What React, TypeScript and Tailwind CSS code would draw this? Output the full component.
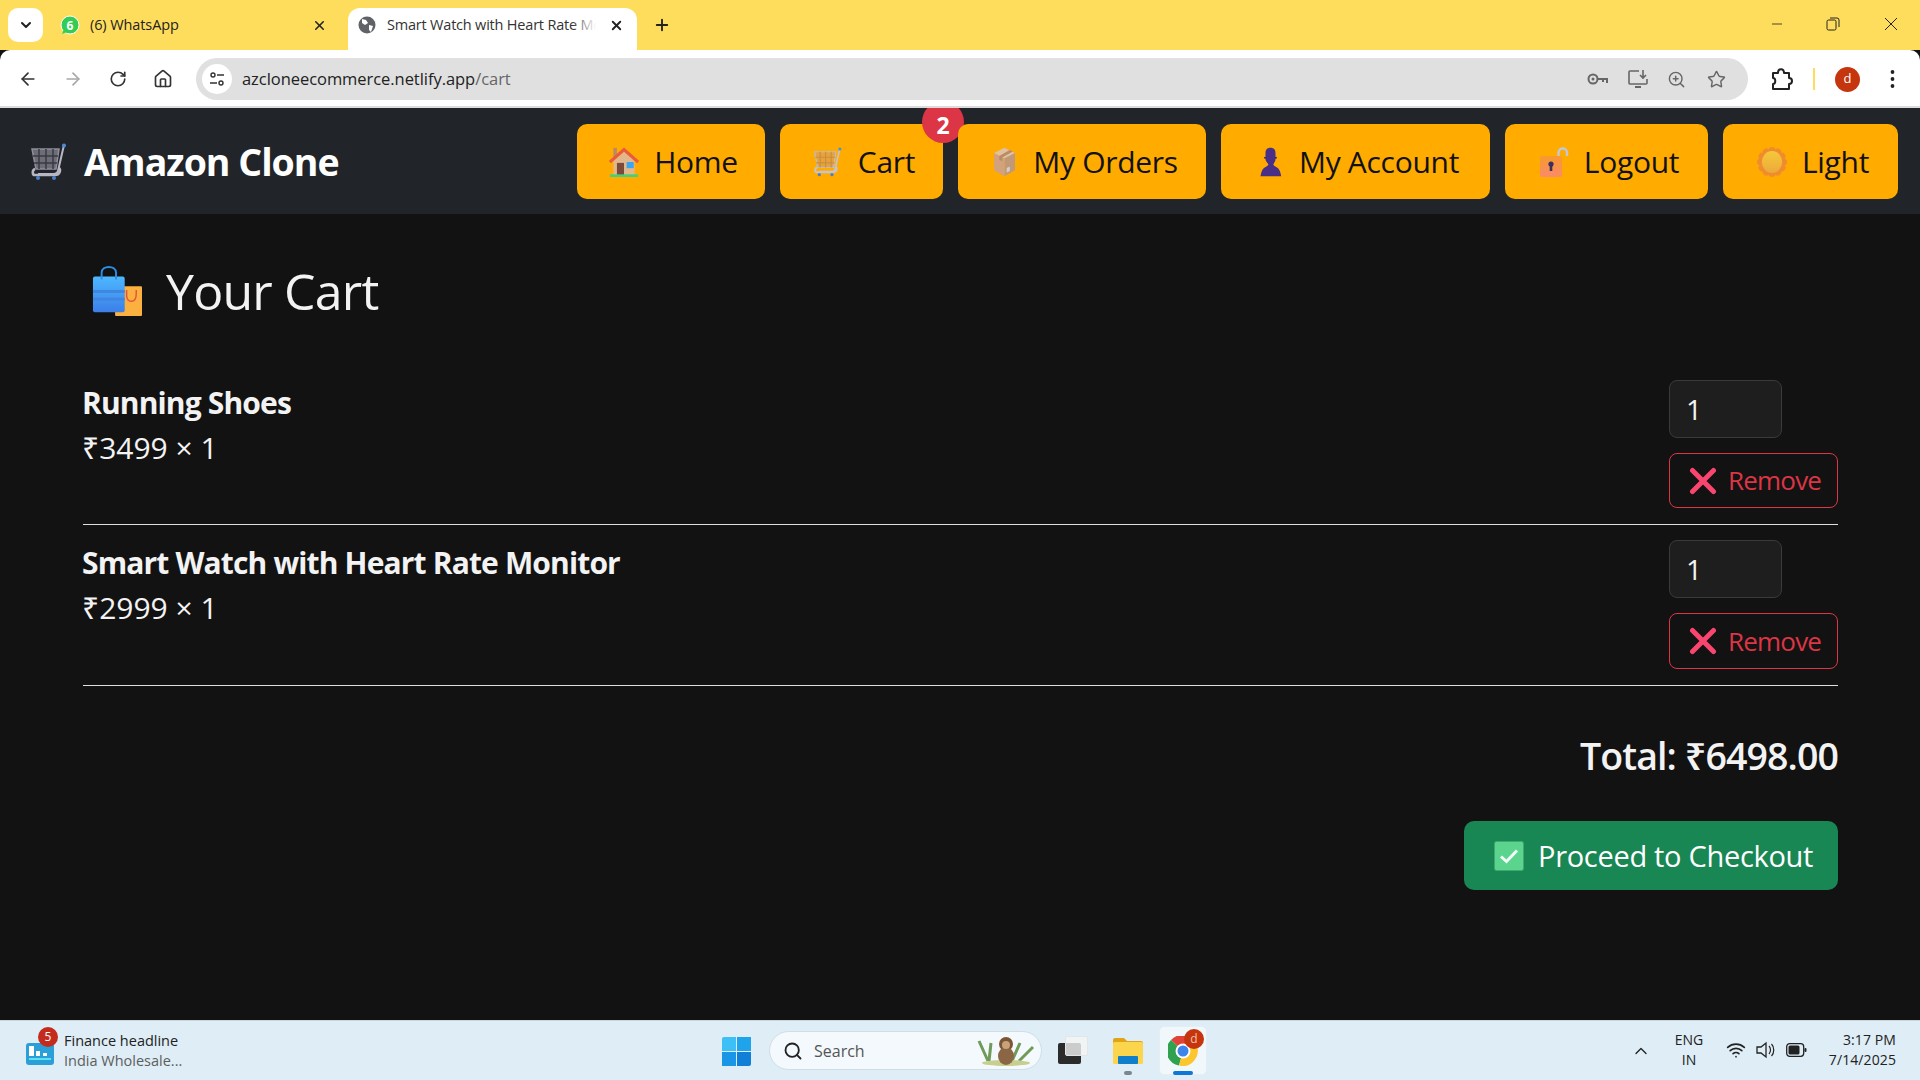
import React from "react";
import { ArrowLeft, ArrowRight, RotateCw, Home, X, Plus, ChevronDown, Star, ZoomIn, Search, ChevronUp, Wifi, Minus } from "lucide-react";

const font = { fontFamily: '"Open Sans","Noto Sans",sans-serif' };

function CartEmoji({ size = 38, basket = "#8f8f9c", grid = "#3a3a44", fill = "#6d6d78", frame = "#b9b6c4" }: any) {
  return (
    <svg width={size} height={size} viewBox="0 0 38 38" className="shrink-0">
      <path d="M2 6h27l-3 20H6z" fill={fill} stroke={basket} strokeWidth="1.5" />
      <path d="M9 6v20M16 6v20M23 6v20M3 13h25M4 20h23" stroke={grid} strokeWidth="1.5" />
      <path d="M34 2l-6 26c-.3 2-2 3-4 3H8" fill="none" stroke={frame} strokeWidth="2" />
      <path d="M5 26c-3 1-3 6 0 6h20c5 0 6-5 4-7" fill="none" stroke={frame} strokeWidth="2.5" />
      <circle cx="34" cy="2.5" r="2" fill="#4a90d9" />
      <circle cx="8" cy="35" r="2" fill="#4a7fc9" />
      <circle cx="24" cy="35" r="2" fill="#4a7fc9" />
    </svg>
  );
}
function HouseEmoji() {
  return (
    <svg width="30" height="30" viewBox="0 0 34 34" className="shrink-0">
      <rect x="5" y="1" width="4" height="12" fill="#b98a68" />
      <path d="M5 16L17 5l12 11v16H5z" fill="#e2b78c" />
      <path d="M1 17L17 3l16 14" fill="none" stroke="#ea5a3c" strokeWidth="3.5" />
      <rect x="9" y="18" width="8" height="14" fill="#7a4a3a" />
      <rect x="20" y="17" width="8" height="7" fill="#3aa5f0" />
      <rect x="1" y="31" width="32" height="3" fill="#45d07a" />
    </svg>
  );
}
function BoxEmoji() {
  return (
    <svg width="27" height="30" viewBox="0 0 30 40" className="shrink-0">
      <path d="M15 1L29 8v23L15 39z" fill="#c09a78" />
      <path d="M15 15L1 8v23l14 8z" fill="#d2a27c" />
      <path d="M1 8l14-7 14 7-14 7z" fill="#e3c09e" />
      <path d="M8 12L22 4l4 2-14 8v5l-4-2z" fill="#b98c68" />
      <path d="M18 28l4-2v6l-4 2z" fill="#d8ccd0" />
    </svg>
  );
}
function PersonEmoji() {
  return (
    <svg width="27" height="30" viewBox="0 0 30 42" className="shrink-0">
      <path d="M15 1c5 0 7 3 7 8v8c0 3-2 5-3 7 0 1 1 2 4 4 4 2 6 6 7 13H1c1-7 3-11 7-13 3-2 4-3 4-4-1-2-4-4-4-7V9c0-5 2-8 7-8z" fill="#4a2f86" />
      <circle cx="7.5" cy="15" r="1.5" fill="#3d2770" />
      <circle cx="22.5" cy="15" r="1.5" fill="#3d2770" />
    </svg>
  );
}
function LockEmoji() {
  return (
    <svg width="30" height="30" viewBox="0 0 30 30" className="shrink-0">
      <path d="M19.5 10V6c0-6 8.5-6 8.5 0v3" fill="none" stroke="#c3c7d6" strokeWidth="2.5" />
      <rect x="1" y="9" width="22" height="21" rx="2" fill="url(#lockg)" />
      <defs>
        <linearGradient id="lockg" x1="0" y1="0" x2="0" y2="1">
          <stop offset="0" stopColor="#f79a2c" />
          <stop offset="1" stopColor="#fb8a6a" />
        </linearGradient>
      </defs>
      <circle cx="12" cy="17" r="2.6" fill="#3b2f5e" />
      <rect x="10.7" y="18" width="2.6" height="6" fill="#3b2f5e" />
    </svg>
  );
}
function SunEmoji() {
  const pts = Array.from({ length: 12 }, (_, i) => i * 30);
  return (
    <svg width="30" height="30" viewBox="0 0 32 34" className="shrink-0">
      {pts.map((a) => (
        <circle key={a} cx="16" cy="4" r="4" fill="#f08c2e" transform={`rotate(${a} 16 17)`} />
      ))}
      <circle cx="16" cy="17" r="13" fill="#f08c2e" />
      <ellipse cx="16" cy="17" rx="11.5" ry="12.5" fill="url(#sung)" />
      <defs>
        <linearGradient id="sung" x1="0" y1="0" x2="0" y2="1">
          <stop offset="0" stopColor="#f4c93a" />
          <stop offset="1" stopColor="#eda93a" />
        </linearGradient>
      </defs>
    </svg>
  );
}
function BagEmoji() {
  return (
    <svg width="50" height="50" viewBox="0 0 52 52" className="shrink-0">
      <rect x="24" y="21" width="28" height="31" rx="1" fill="#fbb040" />
      <path d="M36 25v6c0 8 10 8 10-2v-4" fill="none" stroke="#e5533d" strokeWidth="1.5" />
      <rect x="1" y="11" width="33" height="37" rx="2" fill="url(#bagg)" />
      <rect x="1" y="25" width="33" height="3" fill="#3f86e0" />
      <rect x="1" y="33" width="33" height="3" fill="#3f86e0" />
      <path d="M10 14V7c0-8 15-8 15 0v7" fill="none" stroke="#2a8fe6" strokeWidth="2" />
      <defs>
        <linearGradient id="bagg" x1="0" y1="0" x2="0" y2="1">
          <stop offset="0" stopColor="#4db8ff" />
          <stop offset="1" stopColor="#3c7fe8" />
        </linearGradient>
      </defs>
    </svg>
  );
}
function CrossEmoji() {
  return (
    <svg width="28" height="28" viewBox="0 0 28 28" className="shrink-0">
      <path d="M3.5 3.5l21 21M24.5 3.5l-21 21" stroke="#f8466f" strokeWidth="5" strokeLinecap="round" />
    </svg>
  );
}
function CheckEmoji() {
  return (
    <svg width="30" height="30" viewBox="0 0 30 30" className="shrink-0">
      <rect x="0.5" y="0.5" width="29" height="29" rx="2" fill="#5bd58d" stroke="#3fa870" />
      <path d="M7 15.5l5.5 5L23 9.5" fill="none" stroke="#f5fdf8" strokeWidth="3" />
    </svg>
  );
}

function NavBtn({ w, icon, label, children }: any) {
  return (
    <div className={`relative ${w} h-[75px] rounded-[10px] bg-[#ffab00] flex items-center justify-center gap-[15px] pl-[5px] text-[30px] font-medium text-[#111111] tracking-[-0.3px]`}>
      {icon}
      <span>{label}</span>
      {children}
    </div>
  );
}

function CartRow({ name, price, boxH }: any) {
  return (
    <div className="flex justify-between items-start pt-[15px] pb-[16px] border-b border-[#dedede]">
      <div className="flex flex-col">
        <div className="text-[30px] leading-[40px] font-bold text-[#f3f3f3] mt-[3px] tracking-[-0.85px] -ml-[1px]">{name}</div>
        <div className="text-[30px] leading-[40px] text-[#f3f3f3] mt-[5px] -ml-[1px]">{price}</div>
      </div>
      <div className="flex flex-col items-start gap-[15px] w-[169px]">
        <div className="w-[113px] h-[58px] rounded-[8px] bg-[#1e1e1e] border border-[#3a3a3a] flex items-center pl-[16px] text-[28px] text-[#f3f3f3]">1</div>
        <div className={`w-[169px] ${boxH} rounded-[8px] border border-[#dc3545] flex items-center pl-[19px] gap-[11px] text-[26px] text-[#dc3545] tracking-[-0.8px]`}>
          <CrossEmoji />
          <span>Remove</span>
        </div>
      </div>
    </div>
  );
}

export default function App() {
  return (
    <div className="w-[1920px] h-[1080px] flex flex-col overflow-hidden bg-[#121212]" style={font}>
      {/* tab strip */}
      <div className="h-[50px] shrink-0 bg-[#ffdd5c] flex items-end relative">
        <div className="absolute left-[8px] top-[8px] w-[35px] h-[34px] rounded-[10px] bg-white flex items-center justify-center">
          <ChevronDown size={16} strokeWidth={3} color="#222" />
        </div>
        <div className="ml-[60px] w-[288px] h-[42px] flex items-center text-[14.5px] text-[#222] tracking-[-0.1px] pb-[8px]">
          <svg width="20" height="20" viewBox="0 0 20 20" className="shrink-0">
            <circle cx="10" cy="10" r="9" fill="#33cc55" stroke="#fff" strokeWidth="1" />
            <path d="M2 19l2-5 3 3z" fill="#33cc55" />
            <text x="10" y="14.5" textAnchor="middle" fontSize="12" fontWeight="700" fill="#fff">6</text>
          </svg>
          <span className="ml-[10px]">(6) WhatsApp</span>
          <X size={15} strokeWidth={2.5} className="ml-auto mr-[21px]" color="#222" />
        </div>
        <div className="w-[289px] h-[42px] rounded-t-[12px] bg-white flex items-center pl-[10px] pb-[8px] text-[14.5px] text-[#333] tracking-[-0.2px]">
          <svg width="18" height="18" viewBox="0 0 18 18" className="shrink-0">
            <circle cx="9" cy="9" r="8.5" fill="#5f6368" />
            <path d="M4 3l4 1 2 3-3 2-3-2zM11 9l4 1-2 6-2-2z" fill="#fff" />
          </svg>
          <div className="relative ml-[11px] w-[209px] overflow-hidden whitespace-nowrap">
            Smart Watch with Heart Rate Monitor
            <div className="absolute right-0 top-0 bottom-0 w-[24px] bg-gradient-to-r from-transparent to-white" />
          </div>
          <X size={15} strokeWidth={3} className="ml-[13px]" color="#222" />
        </div>
        <Plus size={18} strokeWidth={2.5} color="#222" className="ml-[16px] mb-[16px]" />
        <Minus size={16} strokeWidth={1.2} color="#222" className="absolute left-[1769px] top-[16px]" />
        <svg width="14" height="14" viewBox="0 0 14 14" className="absolute left-[1826px] top-[17px]">
          <rect x="1" y="3" width="9" height="10" rx="1.5" fill="none" stroke="#222" />
          <path d="M4 1h7a2 2 0 012 2v7" fill="none" stroke="#222" />
        </svg>
        <svg width="14" height="14" viewBox="0 0 14 14" className="absolute left-[1884px] top-[17px]">
          <path d="M1 1l12 12M13 1L1 13" stroke="#222" strokeWidth="1" />
        </svg>
      </div>

      {/* toolbar */}
      <div className="h-[58px] shrink-0 bg-white border-b-2 border-[#dcdcdc] rounded-t-[10px] pt-[2px] flex items-center relative">
        <ArrowLeft size={20} color="#333" strokeWidth={2} className="ml-[18px]" />
        <ArrowRight size={20} color="#a8a8a8" strokeWidth={2} className="ml-[25px]" />
        <RotateCw size={18} color="#333" strokeWidth={2.2} className="ml-[26px]" />
        <Home size={20} color="#333" strokeWidth={2} className="ml-[26px]" />
        <div className="ml-[23px] w-[1552px] h-[42px] rounded-full bg-[#e0e0e0] flex items-center pl-[6px]">
          <div className="w-[30px] h-[30px] rounded-full bg-white flex items-center justify-center">
            <svg width="16" height="16" viewBox="0 0 16 16">
              <circle cx="4" cy="4" r="2" fill="none" stroke="#333" strokeWidth="1.4" />
              <path d="M8 4h7M1 12h7" stroke="#333" strokeWidth="1.4" />
              <circle cx="12" cy="12" r="2" fill="none" stroke="#333" strokeWidth="1.4" />
            </svg>
          </div>
          <span className="ml-[10px] mt-[1px] text-[16.5px] text-[#222] tracking-[-0.05px]">azcloneecommerce.netlify.app<span className="text-[#666]">/cart</span></span>
          <div className="ml-auto flex items-center gap-[18px] mr-[22px]">
            <svg width="22" height="16" viewBox="0 0 22 16">
              <circle cx="6" cy="8" r="4.5" fill="none" stroke="#666" strokeWidth="2" />
              <circle cx="6" cy="8" r="1.5" fill="#666" />
              <path d="M11 7h10v5h-2V9h-2v2h-2V9h-4z" fill="#666" />
            </svg>
            <svg width="22" height="22" viewBox="0 0 22 22">
              <path d="M12 3H3a1 1 0 00-1 1v11a1 1 0 001 1h16a1 1 0 001-1v-4" fill="none" stroke="#666" strokeWidth="1.6" />
              <path d="M8 19h6" stroke="#666" strokeWidth="2" />
              <path d="M16 2v8M13 7l3 3 3-3" fill="none" stroke="#666" strokeWidth="1.6" />
            </svg>
            <ZoomIn size={19} color="#666" strokeWidth={1.8} />
            <Star size={19} color="#666" strokeWidth={1.8} className="ml-[3px]" />
          </div>
        </div>
        <svg width="22" height="24" viewBox="0 0 22 24" className="ml-[23px]">
          <path d="M2 6h5c0-5 6-5 6 0h5v5c4 0 4 6 0 6v5H2v-5c3 0 3-6 0-6z" fill="none" stroke="#222" strokeWidth="2" strokeLinejoin="round" />
        </svg>
        <div className="ml-[20px] w-[2px] h-[22px] bg-[#ffdd5c]" />
        <div className="ml-[20px] w-[25px] h-[25px] rounded-full bg-[#c5350e] flex items-center justify-center text-white text-[13px]">d</div>
        <svg width="5" height="20" viewBox="0 0 5 20" className="ml-[30px]">
          <circle cx="2.5" cy="3" r="1.9" fill="#222" />
          <circle cx="2.5" cy="10" r="1.9" fill="#222" />
          <circle cx="2.5" cy="17" r="1.9" fill="#222" />
        </svg>
      </div>

      {/* page */}
      <div className="flex-1 overflow-hidden flex flex-col relative">
        <nav className="h-[106px] shrink-0 bg-[#212529] flex items-center pl-[30px] pr-[22px] pt-[1px]">
          <CartEmoji />
          <span className="ml-[16px] mt-[2px] text-[37.5px] font-bold text-white tracking-[-1px]">Amazon Clone</span>
          <div className="ml-auto flex gap-[15px]">
            <NavBtn w="w-[188px]" icon={<HouseEmoji />} label="Home" />
            <NavBtn w="w-[163px]" icon={<CartEmoji size={30} basket="#bdbdc8" fill="#e8a23c" grid="#c98f3c" frame="#c4c4d2" />} label="Cart">
              <div className="absolute -right-[21px] -top-[23px] w-[42px] h-[42px] rounded-full bg-[#dc3545] text-white text-[23px] font-bold flex items-center justify-center pt-[7px] tracking-normal">2</div>
            </NavBtn>
            <NavBtn w="w-[248px]" icon={<BoxEmoji />} label="My Orders" />
            <NavBtn w="w-[269px]" icon={<PersonEmoji />} label="My Account" />
            <NavBtn w="w-[203px]" icon={<LockEmoji />} label="Logout" />
            <NavBtn w="w-[175px]" icon={<SunEmoji />} label="Light" />
          </div>
        </nav>

        <main className="flex-1 pl-[83px] pr-[82px] pt-[49px]">
          <h1 className="flex items-center gap-[24px] h-[56px] text-[50px] text-[#f3f3f3] tracking-[-0.8px] pl-[9px]">
            <BagEmoji />
            <span>Your Cart</span>
          </h1>
          <div className="mt-[46px]">
            <CartRow name="Running Shoes" price="₹3499 × 1" boxH="h-[55px]" />
            <CartRow name="Smart Watch with Heart Rate Monitor" price="₹2999 × 1" boxH="h-[56px]" />
          </div>
          <div className="mt-[45px] text-right text-[37.5px] leading-[50px] font-semibold text-[#f3f3f3] tracking-[-0.9px]">Total: ₹6498.00</div>
          <div className="flex justify-end mt-[40px]">
            <div className="w-[374px] h-[69px] rounded-[10px] bg-[#198754] flex items-center pl-[30px] gap-[14px] text-[29px] text-white tracking-[-0.3px]">
              <CheckEmoji />
              <span>Proceed to Checkout</span>
            </div>
          </div>
        </main>
      </div>

      {/* taskbar */}
      <div className="h-[60px] shrink-0 bg-[#deedf6] border-t border-[#c9d6de] flex items-center relative text-[#222]">
        <div className="ml-[26px] flex items-center relative">
          <svg width="28" height="24" viewBox="0 0 28 24" className="mt-[6px]">
            <rect width="28" height="22" y="1" rx="3" fill="#2a9fd8" />
            <rect x="3" y="4" width="5" height="10" fill="#fff" />
            <rect x="10" y="9" width="4" height="5" fill="#fff" />
            <rect x="17" y="11" width="4" height="3" fill="#fff" />
            <rect x="3" y="16" width="22" height="2" fill="#5fe0f0" />
          </svg>
          <div className="absolute left-[12px] -top-[4px] w-[20px] h-[20px] rounded-full bg-[#c42b1c] text-white text-[12px] flex items-center justify-center">5</div>
          <div className="ml-[10px] flex flex-col text-[14.5px] leading-[20px]">
            <span>Finance headline</span>
            <span className="text-[#5d5d5d]">India Wholesale...</span>
          </div>
        </div>
        <div className="absolute left-[722px] top-[16px] w-[29px] h-[29px] grid grid-cols-2 gap-[1px]">
          <div className="bg-[#3cc0f5] rounded-tl-[2px]" />
          <div className="bg-[#1fa4ec]" />
          <div className="bg-[#1a96e6]" />
          <div className="bg-[#0f7fd8] rounded-br-[2px]" />
        </div>
        <div className="absolute left-[769px] top-[10px] w-[273px] h-[39px] rounded-full bg-[#f3f9fc] border border-[#cfdde6] flex items-center pl-[13px] text-[16px] text-[#555]">
          <Search size={20} color="#222" strokeWidth={2.2} />
          <span className="ml-[11px]">Search</span>
          <svg width="58" height="32" viewBox="0 0 58 32" className="ml-auto mr-[6px]">
            <path d="M2 6l9 20M14 8l-2 18M43 8l-8 18M56 12l-14 14" stroke="#6f9a58" strokeWidth="3" fill="none" />
            <ellipse cx="29" cy="28" rx="24" ry="3" fill="#c6cf8e" />
            <circle cx="29" cy="9" r="7" fill="#7a5636" />
            <ellipse cx="29" cy="21" rx="8" ry="9" fill="#8a6644" />
            <circle cx="29" cy="10" r="4" fill="#c9a27a" />
          </svg>
        </div>
        <div className="absolute left-[1058px] top-[15px] w-[30px] h-[30px]">
          <div className="absolute left-0 top-[7px] w-[23px] h-[21px] rounded-[2px] bg-[#2b2b2b]" />
          <div className="absolute left-[7px] top-0 w-[23px] h-[20px] rounded-[2px] bg-[#f5f5f5]/80 border border-[#e5e5e5]" />
        </div>
        <svg width="30" height="28" viewBox="0 0 30 28" className="absolute left-[1113px] top-[16px]">
          <path d="M0 3a2 2 0 012-2h9l3 3h14a2 2 0 012 2v4H0z" fill="#e0a416" />
          <rect y="5" width="30" height="22" rx="1.5" fill="#fbd54b" />
          <rect x="5" y="19" width="20" height="8" rx="1" fill="#0f7ecb" />
        </svg>
        <div className="absolute left-[1124px] top-[50px] w-[8px] h-[4px] rounded-full bg-[#7b8790]" />
        <div className="absolute left-[1159px] top-[5px] w-[48px] h-[49px] rounded-[5px] bg-[#f1f8fc] border border-[#e4eef4]" />
        <svg width="30" height="30" viewBox="0 0 30 30" className="absolute left-[1168px] top-[15px]">
          <path d="M15 15L3 4A15 15 0 0128 8z" fill="#e04438" />
          <path d="M15 15L3 4A15 15 0 0011 29.5z" fill="#2fa14f" />
          <path d="M15 15L28 8A15 15 0 0111 29.5z" fill="#fbc62e" />
          <circle cx="15" cy="15" r="7.5" fill="#fff" />
          <circle cx="15" cy="15" r="5.5" fill="#3f84ea" />
        </svg>
        <div className="absolute left-[1184px] top-[8px] w-[20px] h-[20px] rounded-full bg-[#c5350e] text-[#f3c0a8] text-[12px] flex items-center justify-center">d</div>
        <div className="absolute left-[1173px] top-[50px] w-[20px] h-[4px] rounded-full bg-[#0f78d4]" />
        <ChevronUp size={20} strokeWidth={1.6} color="#222" className="absolute left-[1631px] top-[20px]" />
        <div className="absolute left-[1669px] top-[9px] w-[40px] text-center text-[14px] leading-[20px]">ENG<br />IN</div>
        <Wifi size={20} strokeWidth={2} color="#222" className="absolute left-[1726px] top-[19px]" />
        <svg width="20" height="18" viewBox="0 0 20 18" className="absolute left-[1756px] top-[20px]">
          <path d="M1 6h4l5-4v14l-5-4H1z" fill="none" stroke="#222" strokeWidth="1.3" />
          <path d="M13 5c2 2 2 6 0 8M15.5 3c3 3 3 9 0 12" fill="none" stroke="#222" strokeWidth="1.2" />
        </svg>
        <svg width="21" height="14" viewBox="0 0 21 14" className="absolute left-[1786px] top-[22px]">
          <rect x="0.7" y="0.7" width="17" height="12.6" rx="3" fill="none" stroke="#222" strokeWidth="1.3" />
          <rect x="2.5" y="2.5" width="11" height="9" rx="1.5" fill="#222" />
          <rect x="18.5" y="5" width="2" height="4" rx="1" fill="#222" />
        </svg>
        <div className="absolute right-[24px] top-[9px] text-right text-[14px] leading-[20px] tracking-[0.1px]">3:17 PM<br />7/14/2025</div>
      </div>
    </div>
  );
}
